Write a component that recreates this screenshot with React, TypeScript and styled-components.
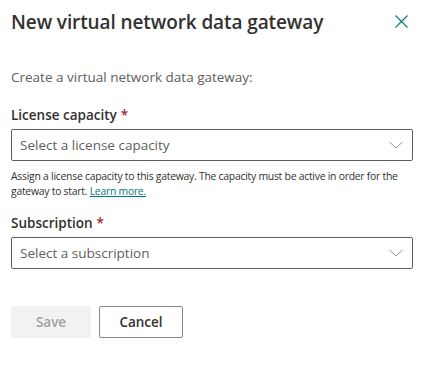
import React from "react";
import styled, { createGlobalStyle } from "styled-components";

const Global = createGlobalStyle`
  html, body { margin: 0; padding: 0; background: #ffffff; }
  body { font-family: "Open Sans", "Noto Sans", sans-serif; color: #323130; }
  * { box-sizing: border-box; }
`;

const Panel = styled.div`
  width: 425px;
  height: 365px;
  padding: 0 12px 0 11px;
  display: flex;
  flex-direction: column;
`;

const Header = styled.div`
  display: flex;
  align-items: center;
  justify-content: space-between;
  height: 42px;
  padding-top: 1px;
`;

const Title = styled.h1`
  margin: 0;
  font-size: 19px;
  font-weight: 600;
  color: #323130;
  letter-spacing: -0.1px;
`;

const CloseButton = styled.button`
  border: none;
  background: transparent;
  padding: 0;
  width: 14px;
  height: 14px;
  margin-right: 5px;
  display: flex;
  align-items: center;
  justify-content: center;
  cursor: pointer;
`;

const Description = styled.p`
  margin: 25px 0 0 0;
  font-size: 13.5px;
  line-height: 20px;
  color: #605e5c;
`;

const Label = styled.label<{ $top: number }>`
  display: block;
  margin-top: ${(p) => p.$top}px;
  font-size: 13.5px;
  font-weight: 600;
  line-height: 20px;
  color: #323130;
`;

const Star = styled.span`
  color: #a4262c;
  margin-left: 4px;
`;

const Dropdown = styled.div`
  margin-top: 4px;
  height: 32px;
  border: 1px solid #605e5c;
  border-radius: 2px;
  display: flex;
  align-items: center;
  justify-content: space-between;
  padding: 0 9px 0 8px;
`;

const Placeholder = styled.span`
  font-size: 13.5px;
  color: #605e5c;
`;

const Helper = styled.p`
  margin: 8px 0 0 0;
  max-width: 392px;
  font-size: 10.4px;
  letter-spacing: -0.25px;
  line-height: 15px;
  color: #323130;
`;

const Link = styled.a`
  color: #03787c;
  text-decoration: underline;
`;

const Actions = styled.div`
  display: flex;
  gap: 8px;
  margin-top: 37px;
`;

const Button = styled.button<{ $primary?: boolean }>`
  height: 32px;
  min-width: ${(p) => (p.$primary ? 80 : 84)}px;
  padding: 0 16px;
  border-radius: 2px;
  font-family: inherit;
  font-size: 13.5px;
  font-weight: 600;
  border: 1px solid ${(p) => (p.$primary ? "#f3f2f1" : "#8a8886")};
  background: ${(p) => (p.$primary ? "#f3f2f1" : "#ffffff")};
  color: ${(p) => (p.$primary ? "#a19f9d" : "#323130")};
`;

const Chevron = () => (
  <svg width="14" height="8" viewBox="0 0 14 8">
    <path d="M0.5 1 L7 7 L13.5 1" fill="none" stroke="#8a8886" strokeWidth="0.9" />
  </svg>
);

export default function App() {
  return (
    <>
      <Global />
      <Panel>
        <Header>
          <Title>New virtual network data gateway</Title>
          <CloseButton aria-label="Close">
            <svg width="13" height="13" viewBox="0 0 13 13">
              <path d="M0.5 0.5 L12.5 12.5 M12.5 0.5 L0.5 12.5" stroke="#03787c" strokeWidth="1.1" />
            </svg>
          </CloseButton>
        </Header>
        <Description>Create a virtual network data gateway:</Description>
        <Label $top={18}>
          License capacity<Star>*</Star>
        </Label>
        <Dropdown>
          <Placeholder>Select a license capacity</Placeholder>
          <Chevron />
        </Dropdown>
        <Helper>
          Assign a license capacity to this gateway. The capacity must be active in order for the gateway to start.{" "}
          <Link href="#">Learn more.</Link>
        </Helper>
        <Label $top={14}>
          Subscription<Star>*</Star>
        </Label>
        <Dropdown>
          <Placeholder>Select a subscription</Placeholder>
          <Chevron />
        </Dropdown>
        <Actions>
          <Button $primary disabled>Save</Button>
          <Button>Cancel</Button>
        </Actions>
      </Panel>
    </>
  );
}
